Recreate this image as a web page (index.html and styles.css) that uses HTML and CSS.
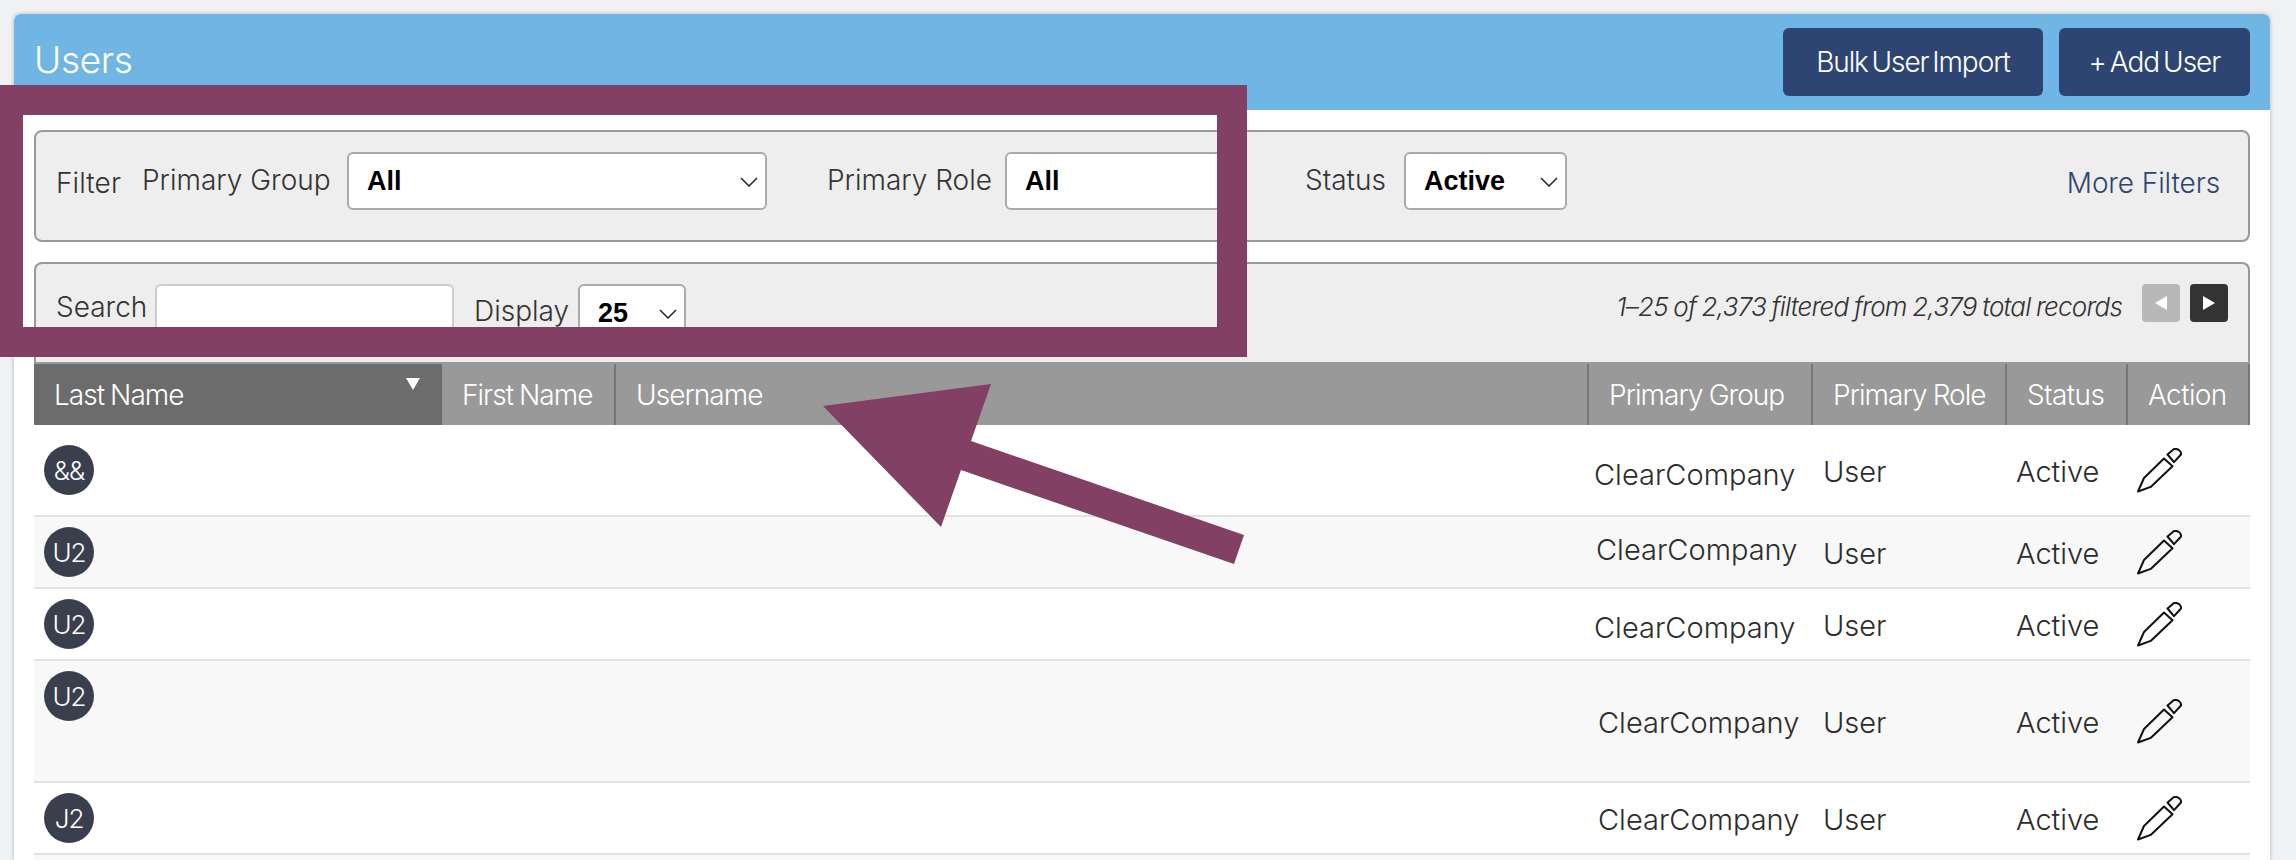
FILE: index.html
```html
<!DOCTYPE html>
<html lang="en">
<head>
<meta charset="utf-8">
<title>Users</title>
<link rel="stylesheet" href="styles.css">
</head>
<body>
<main class="panel">
  <header class="panel-head">
    <h1 class="title">Users</h1>
    <div class="actions">
      <button class="btn btn-bulk">Bulk User Import</button>
      <button class="btn btn-add">+ Add User</button>
    </div>
  </header>
  <div class="content">
    <section class="filter-box">
      <span class="filter-label">Filter</span>
      <span class="lbl">Primary Group</span>
      <div class="sel"><select><option>All</option></select><svg class="chev" viewBox="0 0 18 10"><path d="M1 1l8 8 8-8"/></svg></div>
      <span class="lbl lbl-role">Primary Role</span>
      <div class="sel"><select><option>All</option></select><svg class="chev" viewBox="0 0 18 10"><path d="M1 1l8 8 8-8"/></svg></div>
      <span class="lbl lbl-status">Status</span>
      <div class="sel"><select><option>Active</option></select><svg class="chev" viewBox="0 0 18 10"><path d="M1 1l8 8 8-8"/></svg></div>
      <a class="more">More Filters</a>
    </section>
    <section class="search-box">
      <span class="lbl search-lbl">Search</span>
      <input class="search-input" type="text">
      <span class="lbl display-lbl">Display</span>
      <div class="sel sel-display"><select><option>25</option></select><svg class="chev" viewBox="0 0 18 10"><path d="M1 1l8 8 8-8"/></svg></div>
      <span class="records">1–25 of 2,373 filtered from 2,379 total records</span>
      <button class="page page-prev"><svg viewBox="0 0 14 14"><path d="M13 0v14L1 7z"/></svg></button>
      <button class="page page-next"><svg viewBox="0 0 14 14"><path d="M1 0v14l12-7z"/></svg></button>
    </section>
    <div class="table">
      <div class="thead">
        <div class="th th-sorted">Last Name<svg class="sort" viewBox="0 0 14 12"><path d="M0 0h14L7 12z"/></svg></div>
        <div class="th">First Name</div>
        <div class="th">Username</div>
        <div class="th">Primary Group</div>
        <div class="th">Primary Role</div>
        <div class="th th-short">Status</div>
        <div class="th th-short">Action</div>
      </div>
      <div class="row row-1">
        <div class="cell-name"><span class="avatar">&amp;&amp;</span></div><div></div><div></div>
        <div class="cg cg-1">ClearCompany</div><div class="ct">User</div><div class="ct ct-status">Active</div>
        <div class="cell-act"><svg class="pencil" viewBox="0 0 45 45"><path d="M1 43.500l6-13.500 20-19.500 8.500 7.700-21.800 20.700zM30.500 6.500l6.500-5.500c4-.7 7.500 2 7 5.500l-7 7.700z"/></svg></div>
      </div>
      <div class="row row-2 alt">
        <div class="cell-name"><span class="avatar">U2</span></div><div></div><div></div>
        <div class="cg cg-2">ClearCompany</div><div class="ct">User</div><div class="ct ct-status">Active</div>
        <div class="cell-act"><svg class="pencil" viewBox="0 0 45 45"><path d="M1 43.500l6-13.500 20-19.500 8.500 7.700-21.800 20.700zM30.500 6.500l6.500-5.500c4-.7 7.500 2 7 5.500l-7 7.700z"/></svg></div>
      </div>
      <div class="row row-2">
        <div class="cell-name"><span class="avatar">U2</span></div><div></div><div></div>
        <div class="cg cg-3">ClearCompany</div><div class="ct">User</div><div class="ct ct-status">Active</div>
        <div class="cell-act"><svg class="pencil" viewBox="0 0 45 45"><path d="M1 43.500l6-13.500 20-19.500 8.500 7.700-21.800 20.700zM30.500 6.500l6.500-5.500c4-.7 7.500 2 7 5.500l-7 7.700z"/></svg></div>
      </div>
      <div class="row row-4 alt">
        <div class="cell-name"><span class="avatar">U2</span></div><div></div><div></div>
        <div class="cg cg-4">ClearCompany</div><div class="ct">User</div><div class="ct ct-status">Active</div>
        <div class="cell-act"><svg class="pencil" viewBox="0 0 45 45"><path d="M1 43.500l6-13.500 20-19.500 8.500 7.700-21.800 20.700zM30.500 6.500l6.500-5.500c4-.7 7.500 2 7 5.500l-7 7.700z"/></svg></div>
      </div>
      <div class="row row-2">
        <div class="cell-name"><span class="avatar">J2</span></div><div></div><div></div>
        <div class="cg cg-4">ClearCompany</div><div class="ct">User</div><div class="ct ct-status">Active</div>
        <div class="cell-act"><svg class="pencil" viewBox="0 0 45 45"><path d="M1 43.500l6-13.500 20-19.500 8.500 7.700-21.800 20.700zM30.500 6.500l6.500-5.500c4-.7 7.500 2 7 5.500l-7 7.700z"/></svg></div>
      </div>
      <div class="row row-2 alt"></div>
    </div>
  </div>
</main>
<svg class="annotation" viewBox="0 0 2296 860" aria-hidden="true">
  <path d="M-7 85H1247V357H-7zM23 115V327H1217V115z" fill-rule="evenodd"/>
  <path d="M823 406L991 384 971 441 1244 535 1234 564 961 470 941 527z"/>
</svg>
</body>
</html>
```
FILE: styles.css
```css
* { box-sizing: border-box; }
html, body { margin: 0; height: 860px; overflow: hidden; }
body {
  background: #eff1f3;
  font-family: Inter, "Liberation Sans", sans-serif;
  font-weight: 300;
  color: #333;
  position: relative;
}
.panel {
  margin: 14px 26px 0 14px;
  background: #fff;
  border-radius: 6px 6px 0 0;
  box-shadow: 0 0 4px rgba(0,0,0,.25);
  height: 846px;
  overflow: hidden;
}
.panel-head {
  height: 96px;
  background: #70b6e4;
  border-radius: 6px 6px 0 0;
  padding: 14px 20px;
  display: flex;
  justify-content: space-between;
}
.title {
  margin: 0;
  font-size: 37px;
  line-height: 64px;
  font-weight: 300;
  color: #fff;
  letter-spacing: -.3px;
}
.actions { display: flex; gap: 16px; }
.btn {
  height: 68px;
  border: 0;
  border-radius: 6px;
  background: #2e4573;
  color: #fff;
  font: 300 28px Inter, sans-serif;
  padding: 0;
}
.btn-bulk { width: 260px; letter-spacing: -1.1px; word-spacing: -3px; }
.btn-add { width: 191px; letter-spacing: -1px; word-spacing: -3px; }
.content { padding: 20px 20px 0; }
.filter-box {
  height: 112px;
  background: #eee;
  border: 2px solid #999;
  border-radius: 8px;
  padding: 20px 28px 0 20px;
  display: grid;
  grid-template-columns: 86px 205px 420px 238px 240px 159px 163px 1fr auto;
  align-items: start;
}
.lbl, .filter-label, .more { font-size: 28px; line-height: 56px; }
.filter-label { line-height: 62px; letter-spacing: .1px; }
.lbl-role { margin-left: 60px; }
.lbl-status { margin-left: 60px; }
.more { color: #2e4573; grid-column: 9; line-height: 62px; letter-spacing: -.1px; }
.sel { position: relative; height: 58px; }
.sel select {
  appearance: none;
  width: 100%;
  height: 100%;
  background: #fff;
  border: 2px solid #aaa;
  border-radius: 6px;
  padding: 0 0 0 18px;
  font: 700 27px "Liberation Sans", Arial, sans-serif;
  color: #000;
}
.chev {
  position: absolute;
  right: 9px;
  top: 25px;
  width: 18px;
  height: 10px;
  fill: none;
  stroke: #222;
  stroke-width: 1.500;
  pointer-events: none;
}
.search-box {
  margin-top: 20px;
  height: 100px;
  background: #eee;
  border: 2px solid #999;
  border-bottom: 0;
  border-radius: 8px 8px 0 0;
  padding: 20px 20px 0 20px;
  display: flex;
  align-items: flex-start;
}
.search-lbl { width: 99px; line-height: 46px; }
.search-input {
  width: 299px;
  height: 58px;
  background: #fff;
  border: 2px solid #ccc;
  border-radius: 6px;
}
.display-lbl { margin-left: 20px; width: 104px; line-height: 54px; }
.sel-display { width: 108px; }
.records {
  margin-left: auto;
  font-size: 26px;
  font-style: italic;
  line-height: 46px;
  letter-spacing: -.8px;
  word-spacing: -1px;
}
.page {
  width: 38px;
  height: 38px;
  border: 0;
  border-radius: 4px;
  margin-left: 20px;
  padding: 0;
  display: flex;
  align-items: center;
  justify-content: center;
}
.page svg { width: 14px; height: 14px; fill: #fff; }
.page-prev { background: #b8b8b8; }
.page-next { background: #333; margin-left: 10px; }
.thead, .row { display: grid; }
.thead {
  grid-template-columns: 408px 174px 973px 224px 194px 121px 122px;
  grid-template-rows: 61px;
  background: #999;
  border-top: 2px solid #999;
  height: 63px;
}
.row { grid-template-columns: 407px 174px 973px 224px 194px 121px 123px; }
.th {
  position: relative;
  height: 61px;
  color: #fff;
  font-size: 28px;
  line-height: 63px;
  padding-left: 20px;
  border-right: 2px solid #777;
  letter-spacing: -.95px;
  word-spacing: -1px;
  overflow: hidden;
}
.th-short { letter-spacing: -.6px; }
.th-sorted { background: #6c6c6c; border-right: 0; }
.sort {
  position: absolute;
  left: 372px;
  top: 14px;
  width: 14px;
  height: 12px;
  fill: #fff;
}
.row {
  align-items: center;
  border-bottom: 2px solid #e2e2e2;
  font-size: 29px;
  color: #2c2c2c;
}
.row-1 { height: 92px; }
.row-2 { height: 72px; }
.row-4 { height: 122px; }
.alt { background: #f8f8f8; }
.cell-name { align-self: start; padding: 10px 0 0 10px; }
.row-1 .cell-name { padding-top: 20px; }
.avatar {
  display: flex;
  width: 50px;
  height: 50px;
  align-items: center;
  justify-content: center;
  border-radius: 50%;
  background: #3a3f4d;
  color: #fff;
  font-size: 26px;
  letter-spacing: -1px;
}
.cg { white-space: nowrap; }
.cg-1 { padding: 8px 0 0 6px; }
.cg-2 { padding: 0 0 6px 8px; }
.cg-3 { padding: 6px 0 0 6px; }
.cg-4 { padding: 2px 0 0 10px; }
.ct { padding: 2px 0 0 11px; }
.ct-status { padding-left: 10px; }
.cell-act { padding: 0 0 0 10px; display: flex; align-items: center; }
.pencil { width: 45px; height: 45px; fill: none; stroke: #111; stroke-width: 2; stroke-linejoin: round; }
.annotation {
  position: absolute;
  left: 0;
  top: 0;
  width: 2296px;
  height: 860px;
  fill: #824064;
  pointer-events: none;
}
```
